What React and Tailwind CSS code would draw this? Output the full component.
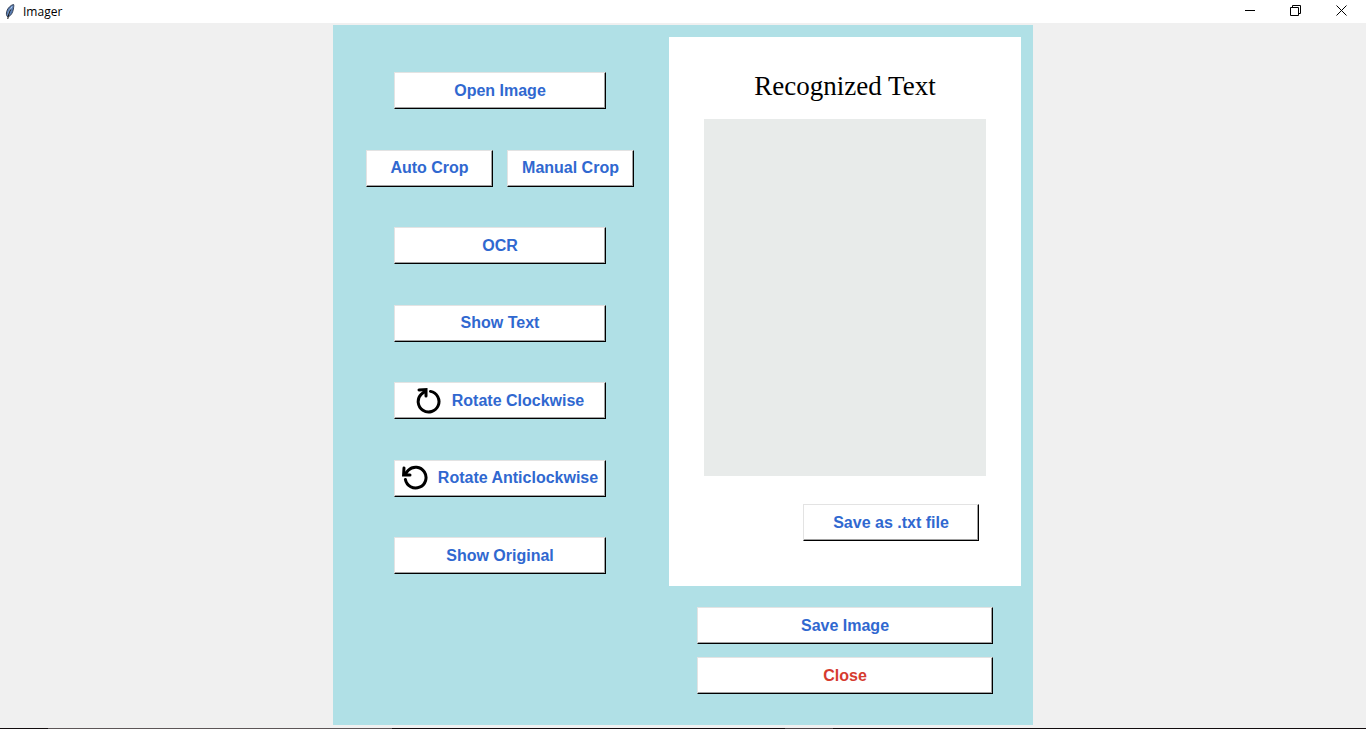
import React from "react";

function ToolButton({ className = "w-53", tone = "text-[#3068d0]", children, ...rest }) {
  return (
    <button
      type="button"
      className={`flex h-[37px] items-center justify-center gap-2.5 border border-t-[#e3e3e3] border-l-[#e3e3e3] border-r-black border-b-black bg-white font-['Liberation_Sans',Arial,sans-serif] text-base font-bold whitespace-nowrap shadow-[inset_-1px_-1px_0_#a0a0a0] ${tone} ${className}`}
      {...rest}
    >
      {children}
    </button>
  );
}

function RotateIcon({ anticlockwise = false }) {
  return (
    <svg viewBox="0 0 26 26" className="size-6.5 shrink-0" fill="none" stroke="#000" strokeWidth="3" aria-hidden="true">
      <g transform={anticlockwise ? "matrix(0 1 1 0 0 0)" : undefined}>
        <path d="M14.5 3.400A10.400 10.400 0 1 1 5.200 6.300L9.300 2.800" strokeLinecap="round" />
        <path d="M3 2L10 1.600V8" strokeLinecap="round" strokeLinejoin="miter" />
        <path d="M6.500 2L10 1.600V6L7.500 5Z" fill="#000" stroke="none" />
      </g>
    </svg>
  );
}

function FeatherIcon() {
  return (
    <svg viewBox="0 0 16 16" className="size-4" aria-hidden="true">
      <path d="M10.600.5C7.800 1 4.600 4 3.700 7.500C3.200 9.500 3.300 11.200 4.200 12.400L5.400 12.800C8.200 11.500 9.800 8.500 10.400 5C10.600 3.200 11.100 1.500 10.600.5Z" fill="#5b7fb5" stroke="#2a3648" strokeWidth=".9" />
      <path d="M9.200 2.400C7.200 5 5.800 8 5.200 11" fill="none" stroke="#b9d2ef" strokeWidth="1" />
      <path d="M7.700 5.500C6 8.500 5.200 11.500 4.800 15" fill="none" stroke="#111" strokeWidth="1" />
    </svg>
  );
}

function CaptionButton({ label, children }) {
  return (
    <button type="button" aria-label={label} className="flex h-full w-[46px] items-center justify-center pb-0.5">
      <svg viewBox="0 0 11 11" className="size-[11px]" fill="none" stroke="#000" strokeWidth="1" aria-hidden="true">
        {children}
      </svg>
    </button>
  );
}

function TitleBar() {
  return (
    <header className="flex h-[23px] items-center justify-between bg-white pr-0.5 pl-[3px]">
      <div className="flex items-center gap-1">
        <FeatherIcon />
        <h1 className="font-['Open_Sans','Noto_Sans',sans-serif] text-xs text-black">Imager</h1>
      </div>
      <div className="flex h-full">
        <CaptionButton label="Minimize">
          <path d="M1 5.500H11" />
        </CaptionButton>
        <CaptionButton label="Restore">
          <path d="M.5 2.500H8.500V10.500H.5ZM2.500 2.500V.5H10.500V8.500H8.500" />
        </CaptionButton>
        <CaptionButton label="Close window">
          <path d="M.5.5L10.500 10.500M10.500.5L.5 10.500" />
        </CaptionButton>
      </div>
    </header>
  );
}

export default function App() {
  return (
    <div className="flex min-h-screen flex-col bg-[#f0f0f0]">
      <TitleBar />

      <main className="flex flex-1 items-start justify-center pt-0.5">
        <div className="flex min-h-[700px] w-full max-w-[700px] bg-[#b0e0e6] pr-3">
          <section aria-label="Image tools" className="flex flex-1 flex-col items-center justify-between pt-[47px] pr-0.5 pb-[151px]">
            <ToolButton>Open Image</ToolButton>
            <div className="flex gap-3.5">
              <ToolButton className="w-[127px]">Auto Crop</ToolButton>
              <ToolButton className="w-[127px]">Manual Crop</ToolButton>
            </div>
            <ToolButton>OCR</ToolButton>
            <ToolButton>Show Text</ToolButton>
            <ToolButton>
              <RotateIcon />
              Rotate Clockwise
            </ToolButton>
            <ToolButton>
              <RotateIcon anticlockwise />
              Rotate Anticlockwise
            </ToolButton>
            <ToolButton>Show Original</ToolButton>
          </section>

          <section aria-label="Output" className="flex w-88 flex-col items-center pt-3">
            <div className="flex w-full flex-col items-center bg-white px-[35px] pt-[33px] pb-[45px]">
              <label
                htmlFor="recognized"
                className="font-['Liberation_Serif','Times_New_Roman',serif] text-[27px] leading-8 text-black"
              >
                Recognized Text
              </label>
              <textarea id="recognized" className="mt-[17px] block h-[357px] w-full resize-none bg-[#e8ebea] p-1 outline-none" />
              <ToolButton className="mt-7 mr-[7px] w-44 self-end">Save as .txt file</ToolButton>
            </div>
            <ToolButton className="mt-[21px] w-74">Save Image</ToolButton>
            <ToolButton className="mt-[13px] w-74" tone="text-[#d63b2f]">
              Close
            </ToolButton>
          </section>
        </div>
      </main>

      <footer className="grid h-px grid-cols-[48px_344px_393px_48px_1fr] bg-[#120c0e]">
        <span className="col-start-2 bg-[#5c5557]" />
        <span className="col-start-4 bg-[#4a4446]" />
      </footer>
    </div>
  );
}
